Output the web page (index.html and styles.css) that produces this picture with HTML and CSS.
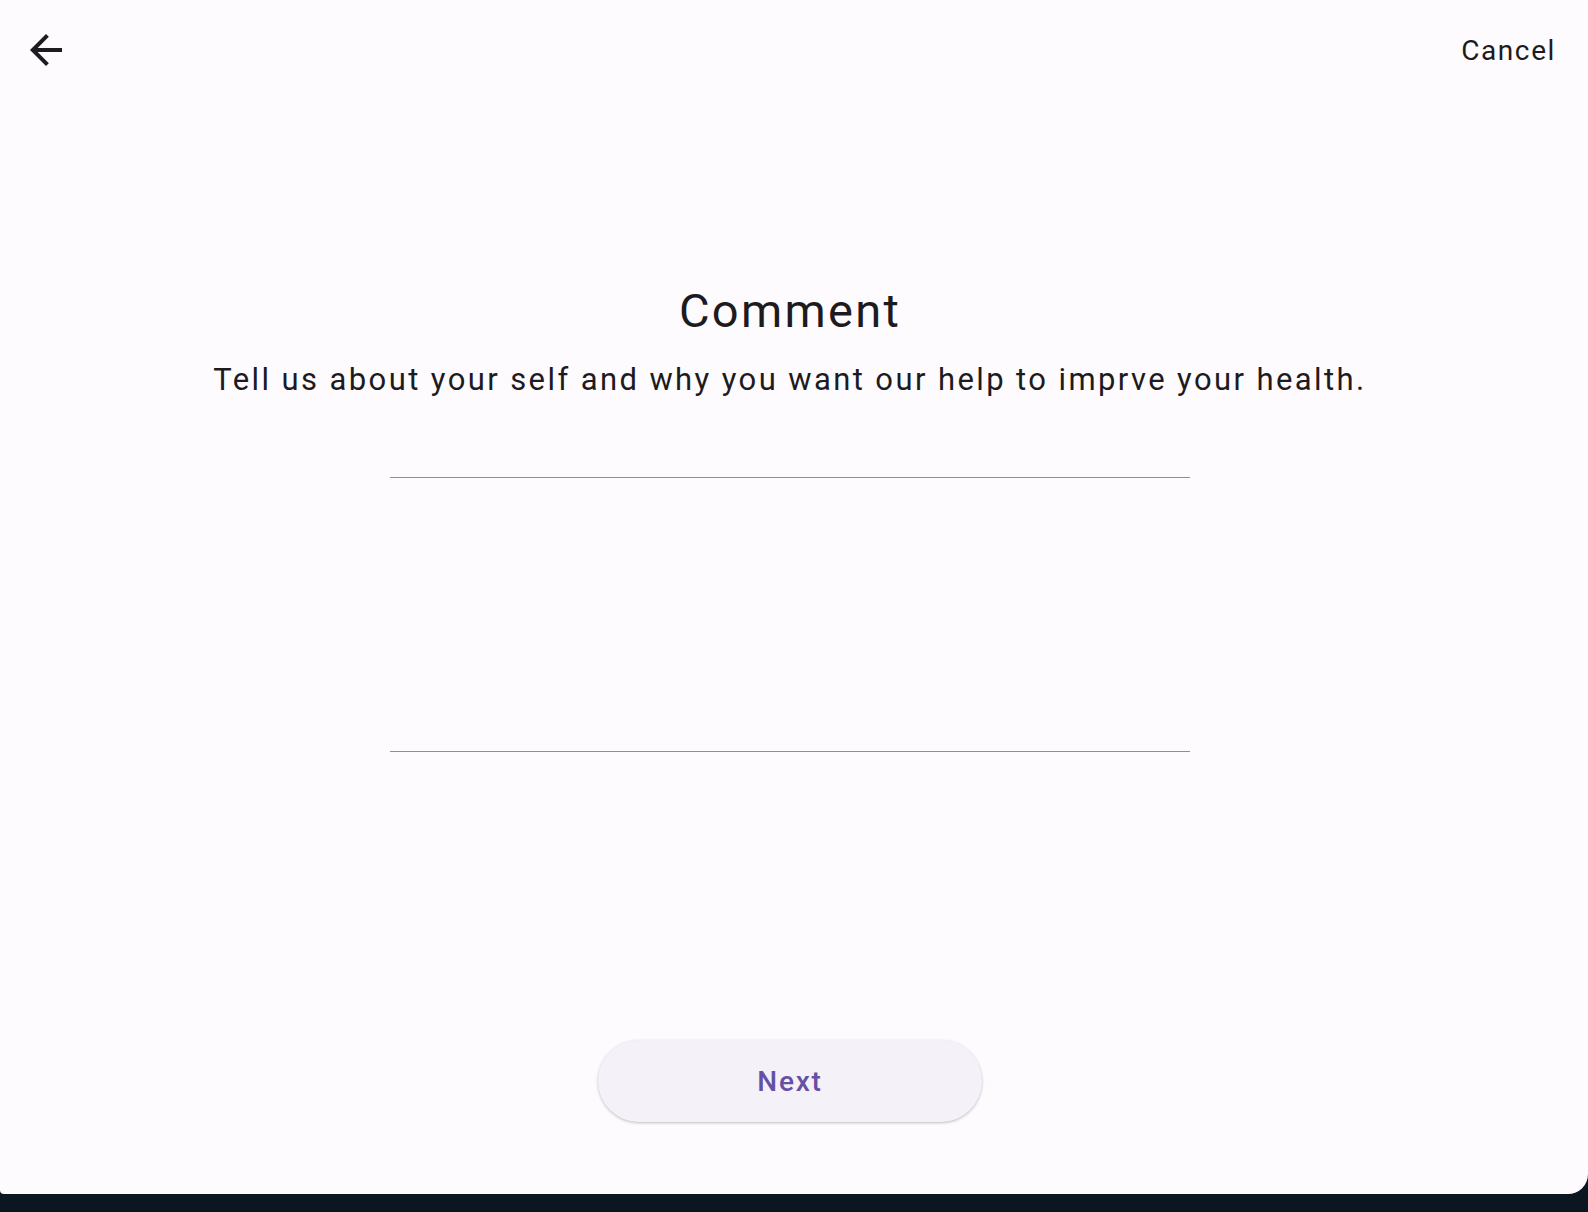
FILE: index.html
```html
<!DOCTYPE html>
<html lang="en">
<head>
<meta charset="utf-8">
<title>Comment</title>
<link rel="stylesheet" href="styles.css">
</head>
<body>
<div class="app">
  <header class="topbar">
    <button class="back" aria-label="Back">
      <svg viewBox="0 0 24 24" width="48" height="48"><path d="M20 11H7.83l5.59-5.59L12 4l-8 8 8 8 1.41-1.41L7.83 13H20v-2z" fill="#1d1b20"/></svg>
    </button>
    <span class="cancel">Cancel</span>
  </header>
  <main class="content">
    <h1 class="title">Comment</h1>
    <p class="subtitle">Tell us about your self and why you want our help to imprve your health.</p>
    <div class="field"></div>
    <div class="spacer"></div>
    <button class="next">Next</button>
  </main>
</div>
</body>
</html>
```

FILE: styles.css
```css
html, body {
  margin: 0;
  padding: 0;
}
body {
  background: #0c1620;
  height: 1212px;
  font-family: Roboto, "Noto Sans", sans-serif;
}
.app {
  height: 1194px;
  background: #fdfbfe;
  border-radius: 0 0 20px 4px;
  display: flex;
  flex-direction: column;
}
.topbar {
  height: 100px;
  display: flex;
  align-items: center;
  justify-content: space-between;
  padding: 0 32px 0 22px;
}
.back {
  width: 48px;
  height: 48px;
  padding: 0;
  border: 0;
  background: none;
  display: flex;
}
.cancel {
  font-size: 28px;
  letter-spacing: 1.6px;
  color: #1d1b20;
}
.content {
  flex: 1;
  display: flex;
  flex-direction: column;
  align-items: center;
  padding-right: 8px;
}
.title {
  margin: 183px 0 0;
  font-size: 47px;
  line-height: 56px;
  font-weight: 400;
  letter-spacing: 2.3px;
  color: #1d1b20;
}
.subtitle {
  margin: 21px 0 0;
  font-size: 31px;
  line-height: 40px;
  letter-spacing: 2.4px;
  color: #1d1b20;
}
.field {
  margin-top: 77px;
  width: 800px;
  height: 273px;
  border-top: 1px solid #908e93;
  border-bottom: 1px solid #908e93;
}
.spacer {
  flex: 1;
}
.next {
  width: 384px;
  height: 82px;
  margin-bottom: 72px;
  border: 0;
  border-radius: 41px;
  background: #f4f1f8;
  box-shadow: 0 1px 3px rgba(0,0,0,0.25);
  font-family: Roboto, "Noto Sans", sans-serif;
  font-size: 28px;
  font-weight: 500;
  letter-spacing: 1.8px;
  color: #6650a4;
}
```
